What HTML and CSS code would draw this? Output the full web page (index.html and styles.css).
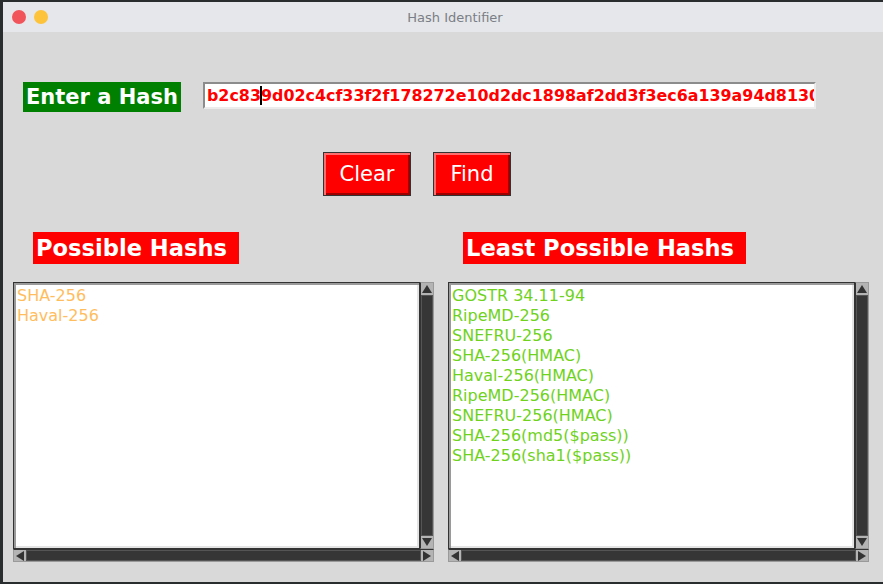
FILE: index.html
```html
<!DOCTYPE html>
<html>
<head>
<meta charset="utf-8">
<link rel="stylesheet" href="styles.css">
</head>
<body>
<div class="window">
  <div class="titlebar">
    <span class="dot red"></span>
    <span class="dot yellow"></span>
    <span class="title">Hash Identifier</span>
  </div>
  <div class="content">
    <div class="row-entry">
      <div class="label green">Enter a Hash</div>
      <div class="entry"><span>b2c83</span><span class="caret"></span><span>9d02c4cf33f2f178272e10d2dc1898af2dd3f3ec6a139a94d8130b8a1c4</span></div>
    </div>
    <div class="row-buttons">
      <button class="btn btn-clear">Clear</button>
      <button class="btn btn-find">Find</button>
    </div>
    <div class="row-labels">
      <div class="label red-label left-label">Possible Hashs </div>
      <div class="label red-label right-label">Least Possible Hashs </div>
    </div>
    <div class="row-lists">
      <div class="listpanel left-panel">
        <div class="listbox orange">
          <div>SHA-256</div>
          <div>Haval-256</div>
        </div>
        <div class="vscroll">
          <div class="arrow"><svg width="12" height="12" viewBox="0 0 12 12"><polygon points="6,2 11,10 1,10" fill="#333"/></svg></div>
          <div class="thumb"></div>
          <div class="arrow"><svg width="12" height="12" viewBox="0 0 12 12"><polygon points="1,2 11,2 6,10" fill="#333"/></svg></div>
        </div>
        <div class="hscroll">
          <div class="arrow"><svg width="12" height="12" viewBox="0 0 12 12"><polygon points="2,6 10,1 10,11" fill="#333"/></svg></div>
          <div class="thumb"></div>
          <div class="arrow"><svg width="12" height="12" viewBox="0 0 12 12"><polygon points="2,1 10,6 2,11" fill="#333"/></svg></div>
        </div>
      </div>
      <div class="listpanel right-panel">
        <div class="listbox lime">
          <div>GOSTR 34.11-94</div>
          <div>RipeMD-256</div>
          <div>SNEFRU-256</div>
          <div>SHA-256(HMAC)</div>
          <div>Haval-256(HMAC)</div>
          <div>RipeMD-256(HMAC)</div>
          <div>SNEFRU-256(HMAC)</div>
          <div>SHA-256(md5($pass))</div>
          <div>SHA-256(sha1($pass))</div>
        </div>
        <div class="vscroll">
          <div class="arrow"><svg width="12" height="12" viewBox="0 0 12 12"><polygon points="6,2 11,10 1,10" fill="#333"/></svg></div>
          <div class="thumb"></div>
          <div class="arrow"><svg width="12" height="12" viewBox="0 0 12 12"><polygon points="1,2 11,2 6,10" fill="#333"/></svg></div>
        </div>
        <div class="hscroll">
          <div class="arrow"><svg width="12" height="12" viewBox="0 0 12 12"><polygon points="2,6 10,1 10,11" fill="#333"/></svg></div>
          <div class="thumb"></div>
          <div class="arrow"><svg width="12" height="12" viewBox="0 0 12 12"><polygon points="2,1 10,6 2,11" fill="#333"/></svg></div>
        </div>
      </div>
    </div>
  </div>
</div>
</body>
</html>
```
FILE: styles.css
```css
* { box-sizing: border-box; }
html, body { margin: 0; padding: 0; }
body {
  width: 883px;
  height: 584px;
  overflow: hidden;
  background: #2a2d2e;
  padding: 2px 0 0 3px;
  font-family: "DejaVu Sans", sans-serif;
}
.window {
  width: 904px;
  height: 580px;
  background: #d9d9d9;
  display: flex;
  flex-direction: column;
}
.titlebar {
  height: 30px;
  background: #e6e7ea;
  display: flex;
  align-items: center;
  padding-left: 9px;
  gap: 8px;
  position: relative;
  flex: none;
}
.dot {
  width: 14px;
  height: 14px;
  border-radius: 50%;
  display: block;
}
.dot.red { background: #f2545b; }
.dot.yellow { background: #fdc33a; }
.title {
  position: absolute;
  left: 0;
  right: 0;
  text-align: center;
  font-size: 13px;
  color: #7a7e86;
  top: 8px;
}
.content {
  flex: 1;
  display: flex;
  flex-direction: column;
}
.label {
  color: #fff;
  font-weight: bold;
  white-space: pre;
  padding: 0 3px;
}
.green {
  background: #008000;
  font-size: 21px;
  height: 30px;
  line-height: 30px;
  width: 158px;
}
.row-entry {
  display: flex;
  align-items: flex-start;
  margin-top: 50px;
  padding-left: 20px;
  gap: 22px;
}
.entry {
  width: 613px;
  height: 27px;
  background: #fff;
  border: 2px solid;
  border-color: #8c8c8c #ececec #ececec #8c8c8c;
  color: #ff0000;
  font-weight: bold;
  font-size: 15.9px;
  line-height: 23px;
  padding-left: 2px;
  white-space: nowrap;
  overflow: hidden;
  display: flex;
  align-items: center;
}
.caret {
  display: inline-block;
  width: 1.5px;
  height: 19px;
  background: #000;
  margin: 0 -0.75px;
  flex: none;
}
.row-buttons {
  display: flex;
  margin-top: 40px;
  padding-left: 320px;
  gap: 22px;
}
.btn {
  height: 44px;
  background: #ff0000;
  color: #fff;
  font-family: "DejaVu Sans", sans-serif;
  font-size: 21px;
  border: 1px solid #333;
  box-shadow: inset 2px 2px 0 #ff6e6e, inset -2px -2px 0 #9e0000;
  padding: 0;
  margin: 0;
}
.btn-clear { width: 88px; }
.btn-find { width: 78px; }
.row-labels {
  display: flex;
  margin-top: 36px;
}
.red-label {
  background: #ff0000;
  font-size: 22.6px;
  height: 32px;
  line-height: 32px;
}
.left-label { margin-left: 30px; width: 206px; }
.right-label { margin-left: 224px; width: 283px; }
.row-lists {
  display: flex;
  margin-top: 18px;
  padding-left: 10px;
  gap: 14px;
}
.listpanel {
  width: 421px;
  height: 280px;
  display: grid;
  grid-template-columns: 1fr 14px;
  grid-template-rows: 1fr 13px;
}
.listbox {
  background: #fff;
  border: 1px solid #333;
  box-shadow: inset 2px 2px 0 #9a9a9a, inset -2px -2px 0 #e4e4e4;
  padding: 3px 3px 2px;
  font-size: 16px;
  line-height: 20px;
  overflow: hidden;
}
.orange { color: #ffbd5e; }
.lime { color: #6fd21c; }
.vscroll {
  background: #333;
  border: 1px solid #9a9a9a;
  border-left: 1px solid #333;
  display: flex;
  flex-direction: column;
}
.hscroll {
  grid-column: 1 / span 2;
  background: #333;
  border: 1px solid #9a9a9a;
  border-top: 1px solid #333;
  display: flex;
}
.arrow {
  background: #b4b4b4;
  width: 12px;
  height: 12px;
  flex: none;
  display: flex;
}
.hscroll .arrow { height: 11px; }
.thumb {
  flex: 1;
  background: #363636;
  border: 1px solid #555;
}
```
